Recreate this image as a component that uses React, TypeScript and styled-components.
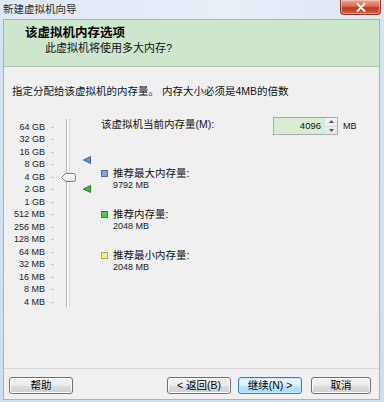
import React from "react";
import styled, { createGlobalStyle } from "styled-components";

const FONT = `"Liberation Sans", "Noto Sans CJK SC", sans-serif`;

const Global = createGlobalStyle`
  html, body { margin: 0; padding: 0; width: 384px; height: 402px; overflow: hidden; background: #d7e4f2; }
  #root { width: 384px; height: 402px; }
  * { box-sizing: border-box; }
`;

const Window = styled.div`
  width: 384px;
  height: 402px;
  display: flex;
  flex-direction: column;
  padding: 0 4px 2px 3px;
  background: linear-gradient(to bottom, #e3ecf6 0px, #d6e3f1 20px, #cfdeee 100%);
  font-family: ${FONT};
  color: #111;
`;

const TitleBar = styled.div`
  height: 19px;
  margin: 0 -4px 0 -3px;
  display: flex;
  justify-content: space-between;
  align-items: flex-start;
  background: linear-gradient(to right, #dfe8f3, #e8eff7 60%, #dde7f2);
`;

const TitleText = styled.div`
  padding-left: 3px;
  line-height: 19px;
  font-size: 10.5px;
  color: #2a2a2a;
`;

const CloseButton = styled.div`
  width: 41px;
  height: 15px;
  margin-right: 3px;
  border: 1px solid #8a3a2c;
  border-top: none;
  border-radius: 0 0 4px 4px;
  background: linear-gradient(to bottom, #e9a896 0%, #d96a52 45%, #c2391f 55%, #cf6145 100%);
  box-shadow: inset 0 0 0 1px rgba(255, 220, 210, 0.5);
  display: flex;
  align-items: center;
  justify-content: center;
`;

const Client = styled.div`
  flex: 1;
  display: flex;
  flex-direction: column;
  border: 1px solid #a4b3c4;
  background: #f0f0f0;
`;

const Header = styled.div`
  height: 47px;
  background: #cfe6ce;
  border-bottom: 1px solid #b4c4b3;
  padding-top: 6px;
`;

const HeaderTitle = styled.div`
  padding-left: 21px;
  font-size: 12.5px;
  font-weight: bold;
  line-height: 15px;
  color: #000;
`;

const HeaderSub = styled.div`
  padding-left: 41px;
  font-size: 11px;
  line-height: 14px;
  color: #111;
`;

const Body = styled.div`
  flex: 1;
  display: flex;
  flex-direction: column;
`;

const Instruction = styled.div`
  padding: 17px 0 0 8px;
  font-size: 10.5px;
  line-height: 14px;
`;

const Main = styled.div`
  margin-top: 19px;
  display: flex;
`;

const Scale = styled.div`
  width: 97px;
  display: flex;
`;

const ScaleLabels = styled.div`
  padding-top: 3.75px;
  display: flex;
  flex-direction: column;
`;

const ScaleRow = styled.div`
  height: 12.5px;
  display: flex;
  align-items: center;
`;

const ScaleLabel = styled.span`
  width: 41px;
  text-align: right;
  font-size: 9px;
  color: #222;
  line-height: 12.5px;
`;

const Tick = styled.span`
  width: 3px;
  height: 1px;
  margin-left: 6px;
  background: #c4c4c4;
`;

const SliderCol = styled.div`
  position: relative;
  flex: 1;
  margin-left: 4px;
  height: 192px;
`;

const Track = styled.div`
  position: absolute;
  left: 8px;
  top: 2px;
  width: 4px;
  height: 188px;
  border-left: 1px solid #b3b3b3;
  border-right: 1px solid #dadada;
  background: #fbfbfb;
`;

const Overlay = styled.div<{ $left: number; $top: number }>`
  position: absolute;
  left: ${(p) => p.$left}px;
  top: ${(p) => p.$top}px;
  display: flex;
`;

const RightCol = styled.div`
  flex: 1;
  display: flex;
  flex-direction: column;
`;

const MemRow = styled.div`
  height: 18px;
  display: flex;
  align-items: center;
`;

const MemLabel = styled.div`
  width: 172px;
  font-size: 10.5px;
  line-height: 18px;
  margin-top: -4px;
`;

const InputBox = styled.div`
  width: 65px;
  height: 18px;
  border: 1px solid #abadb3;
  border-top-color: #a0a4ab;
  background: #fff;
  display: flex;
`;

const InputValue = styled.div`
  flex: 1;
  background: #d7ecd3;
  text-align: right;
  padding-right: 3px;
  font-size: 9.5px;
  line-height: 16px;
  color: #111;
`;

const Spinner = styled.div`
  width: 13px;
  display: flex;
  flex-direction: column;
  border-left: 1px solid #e2e2e2;
  background: linear-gradient(to bottom, #f5f5f5, #e6e6e6);
`;

const SpinHalf = styled.div`
  flex: 1;
  display: flex;
  align-items: center;
  justify-content: center;
  border-bottom: 1px solid #dcdcdc;
  &:last-child { border-bottom: none; }
`;

const Unit = styled.div`
  margin-left: 5px;
  font-size: 9px;
  line-height: 18px;
`;

const Legend = styled.div`
  margin-top: 31.5px;
  display: flex;
  flex-direction: column;
  gap: 17px;
`;

const LegendGroup = styled.div`
  display: flex;
  flex-direction: column;
`;

const LegendTitle = styled.div`
  height: 13px;
  display: flex;
  align-items: center;
  font-size: 10.5px;
  line-height: 13px;
`;

const Swatch = styled.span<{ $fill: string; $edge: string }>`
  width: 7px;
  height: 7px;
  margin-right: 5px;
  background: ${(p) => p.$fill};
  border: 1px solid ${(p) => p.$edge};
`;

const LegendValue = styled.div`
  padding-left: 12px;
  height: 11px;
  line-height: 11px;
  font-size: 9px;
  color: #222;
`;

const Footer = styled.div`
  border-top: 1px solid #d6d6d6;
  padding: 8px 8px 5px 5px;
  display: flex;
  align-items: flex-start;
`;

const Button = styled.div<{ $primary?: boolean; $w: number; $ml?: number; $auto?: boolean }>`
  width: ${(p) => p.$w}px;
  height: 17px;
  margin-left: ${(p) => (p.$auto ? "auto" : `${p.$ml ?? 0}px`)};
  border: 1px solid ${(p) => (p.$primary ? "#3c7fb1" : "#707070")};
  border-radius: 3px;
  background: ${(p) =>
    p.$primary
      ? "linear-gradient(to bottom, #eaf6fd 0%, #d9f0fc 50%, #bee6fd 51%, #a7d9f5 100%)"
      : "linear-gradient(to bottom, #f2f2f2 0%, #ebebeb 50%, #dddddd 51%, #cfcfcf 100%)"};
  box-shadow: inset 0 0 0 1px ${(p) => (p.$primary ? "#c8e8f9" : "#fbfbfb")};
  display: flex;
  align-items: center;
  justify-content: center;
  font-size: 10.5px;
  line-height: 15px;
  color: #000;
  white-space: nowrap;
`;

const scaleLabels = [
  "64 GB", "32 GB", "16 GB", "8 GB", "4 GB", "2 GB", "1 GB",
  "512 MB", "256 MB", "128 MB", "64 MB", "32 MB", "16 MB", "8 MB", "4 MB",
];

const legends = [
  { title: "推荐最大内存量:", value: "9792 MB", fill: "#87a4d6", edge: "#4f6ea8" },
  { title: "推荐内存量:", value: "2048 MB", fill: "#5cc454", edge: "#2f8a2a" },
  { title: "推荐最小内存量:", value: "2048 MB", fill: "#f4f08a", edge: "#b5ad3d" },
];

function Marker({ fill, edge }: { fill: string; edge: string }) {
  return (
    <svg width="8" height="8" viewBox="0 0 8 8">
      <polygon points="7.5,0.5 7.5,7.5 0.5,4" fill={fill} stroke={edge} strokeWidth="1" strokeLinejoin="round" />
    </svg>
  );
}

export default function App() {
  return (
    <>
      <Global />
      <Window>
        <TitleBar>
          <TitleText>新建虚拟机向导</TitleText>
          <CloseButton>
            <svg width="10" height="9" viewBox="0 0 10 9">
              <path d="M1.5 1 L8.5 8 M8.5 1 L1.5 8" stroke="#5a1a10" strokeWidth="3" strokeLinecap="round" opacity="0.35" />
              <path d="M1.5 1 L8.5 8 M8.5 1 L1.5 8" stroke="#fff" strokeWidth="2" strokeLinecap="round" />
            </svg>
          </CloseButton>
        </TitleBar>
        <Client>
          <Header>
            <HeaderTitle>该虚拟机内存选项</HeaderTitle>
            <HeaderSub>此虚拟机将使用多大内存?</HeaderSub>
          </Header>
          <Body>
            <Instruction>指定分配给该虚拟机的内存量。 内存大小必须是4MB的倍数</Instruction>
            <Main>
              <Scale>
                <ScaleLabels>
                  {scaleLabels.map((l) => (
                    <ScaleRow key={l}>
                      <ScaleLabel>{l}</ScaleLabel>
                      <Tick />
                    </ScaleRow>
                  ))}
                </ScaleLabels>
                <SliderCol>
                  <Track />
                  <Overlay $left={3} $top={56}>
                    <svg width="15" height="9" viewBox="0 0 15 9">
                      <defs>
                        <linearGradient id="th" x1="0" y1="0" x2="0" y2="1">
                          <stop offset="0" stopColor="#ffffff" />
                          <stop offset="1" stopColor="#e4e4e4" />
                        </linearGradient>
                      </defs>
                      <path d="M0.5 4.5 L4 1 Q4.5 0.5 5.2 0.5 H12.5 Q14.5 0.5 14.5 2.5 V6.5 Q14.5 8.5 12.5 8.5 H5.2 Q4.5 8.5 4 8 Z" fill="url(#th)" stroke="#7b7b7b" strokeWidth="1" />
                    </svg>
                  </Overlay>
                  <Overlay $left={25} $top={39}>
                    <Marker fill="#6f8fcb" edge="#3f5f9c" />
                  </Overlay>
                  <Overlay $left={25} $top={68}>
                    <Marker fill="#44b83b" edge="#22841f" />
                  </Overlay>
                </SliderCol>
              </Scale>
              <RightCol>
                <MemRow>
                  <MemLabel>该虚拟机当前内存量(M):</MemLabel>
                  <InputBox>
                    <InputValue>4096</InputValue>
                    <Spinner>
                      <SpinHalf>
                        <svg width="5" height="3" viewBox="0 0 5 3"><polygon points="0,3 5,3 2.5,0" fill="#555" /></svg>
                      </SpinHalf>
                      <SpinHalf>
                        <svg width="5" height="3" viewBox="0 0 5 3"><polygon points="0,0 5,0 2.5,3" fill="#555" /></svg>
                      </SpinHalf>
                    </Spinner>
                  </InputBox>
                  <Unit>MB</Unit>
                </MemRow>
                <Legend>
                  {legends.map((g) => (
                    <LegendGroup key={g.title}>
                      <LegendTitle>
                        <Swatch $fill={g.fill} $edge={g.edge} />
                        {g.title}
                      </LegendTitle>
                      <LegendValue>{g.value}</LegendValue>
                    </LegendGroup>
                  ))}
                </Legend>
              </RightCol>
            </Main>
          </Body>
          <Footer>
            <Button $w={64}>帮助</Button>
            <Button $w={64} $auto>&lt; 返回(B)</Button>
            <Button $w={64} $ml={7} $primary>继续(N) &gt;</Button>
            <Button $w={60} $ml={9}>取消</Button>
          </Footer>
        </Client>
      </Window>
    </>
  );
}
